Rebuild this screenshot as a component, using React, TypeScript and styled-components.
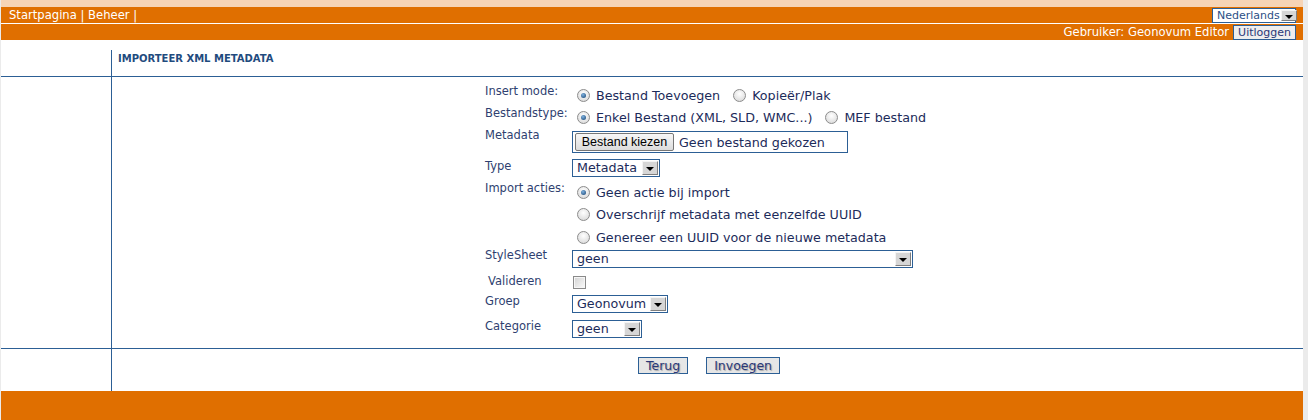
import React from "react";
import styled, { createGlobalStyle } from "styled-components";

const GlobalStyle = createGlobalStyle`
  html, body {
    margin: 0;
    padding: 0;
    background: #ebebeb;
  }
  body {
    font-family: "DejaVu Sans", Verdana, sans-serif;
    overflow: hidden;
  }
`;

const BLUE = "#2c5f95";
const ORANGE = "#e06f00";
const NAVY = "#1c2b5a";

const Page = styled.div`
  width: 1302px;
  margin-left: 1px;
  background: #fff;
`;

const TopStrip = styled.div`
  height: 7px;
  background: #f6d4b6;
`;

const NavBar = styled.div`
  height: 16px;
  background: ${ORANGE};
  display: flex;
  align-items: flex-start;
  justify-content: space-between;
  padding: 0 7px 0 8px;
  color: #fff;
  font-size: 11.6px;
  line-height: 16px;
`;

const LangWrap = styled.div`
  display: flex;
  padding-top: 1px;
`;

const UserBar = styled.div`
  height: 16px;
  background: ${ORANGE};
  border-top: 1px solid #fff;
  display: flex;
  align-items: center;
  justify-content: flex-end;
  gap: 4px;
  padding-right: 7px;
  color: #fff;
  font-size: 11.6px;
`;

const SelectBox = styled.div<{ $w: number; $small?: boolean }>`
  display: flex;
  align-items: center;
  justify-content: space-between;
  box-sizing: border-box;
  width: ${(p) => p.$w}px;
  height: ${(p) => (p.$small ? 15 : 18)}px;
  border: 1px solid ${BLUE};
  background: #fff;
  padding-left: 4px;
  font-size: ${(p) => (p.$small ? 11 : 12.7)}px;
  color: ${(p) => (p.$small ? "#2c4f86" : NAVY)};
  line-height: 1;
`;

const Arrow = styled.span<{ $small?: boolean }>`
  position: relative;
  flex: none;
  box-sizing: border-box;
  width: 16px;
  height: ${(p) => (p.$small ? 11 : 14)}px;
  margin: 1px;
  background: #d6d6d6;
  border: 1px solid;
  border-color: #f4f4f4 #7f7f7f #7f7f7f #f4f4f4;
  &::after {
    content: "";
    position: absolute;
    left: 3px;
    top: ${(p) => (p.$small ? 4 : 5)}px;
    border-left: 4px solid transparent;
    border-right: 4px solid transparent;
    border-top: 4px solid #000;
  }
`;

const HeadButton = styled.div`
  box-sizing: border-box;
  height: 15px;
  padding: 0 4px;
  border: 1px solid ${BLUE};
  background: #eeeeee;
  color: #2a3878;
  font-size: 11px;
  line-height: 13px;
`;

const TableRow = styled.div<{ $h: number; $last?: boolean }>`
  display: grid;
  grid-template-columns: 110px 1fr;
  height: ${(p) => p.$h}px;
  border-bottom: ${(p) => (p.$last ? "none" : `1px solid ${BLUE}`)};
`;

const SideCell = styled.div``;

const TitleCell = styled.div`
  margin-top: 10px;
  border-left: 1px solid ${BLUE};
  padding: 2px 0 0 6px;
  font-size: 10px;
  line-height: 14px;
  font-weight: bold;
  color: #1f4b7e;
`;

const MainCell = styled.div<{ $pad: number }>`
  border-left: 1px solid ${BLUE};
  display: flex;
  justify-content: center;
  align-items: flex-start;
  padding-top: ${(p) => p.$pad}px;
`;

const Form = styled.div`
  width: 445px;
  display: flex;
  flex-direction: column;
`;

const FormRow = styled.div`
  display: grid;
  grid-template-columns: 87px 1fr;
  align-items: start;
`;

const Label = styled.div<{ $indent?: number; $top?: number }>`
  font-size: 11.5px;
  line-height: 14px;
  color: #2f3f70;
  padding-left: ${(p) => p.$indent ?? 0}px;
  margin-top: ${(p) => p.$top ?? 0}px;
`;

const Controls = styled.div`
  display: flex;
  flex-direction: column;
`;

const RadioLine = styled.div<{ $h?: number }>`
  display: flex;
  align-items: center;
  height: ${(p) => p.$h ?? 22}px;
  padding-left: 5px;
`;

const Option = styled.label`
  display: inline-flex;
  align-items: center;
  gap: 6px;
  font-size: 12.7px;
  color: ${NAVY};
  white-space: nowrap;
  & + & {
    margin-left: 13px;
  }
`;

const Radio = styled.span<{ $checked?: boolean }>`
  position: relative;
  flex: none;
  box-sizing: border-box;
  width: 13px;
  height: 13px;
  border-radius: 50%;
  border: 1px solid #8c8c8c;
  background: radial-gradient(circle at 50% 35%, #ffffff, #d4d4d4);
  &::after {
    content: "";
    display: ${(p) => (p.$checked ? "block" : "none")};
    position: absolute;
    inset: 3px;
    border-radius: 50%;
    background: radial-gradient(circle at 40% 35%, #7fb2e0, #133f6d);
  }
`;

const FileBox = styled.div`
  display: flex;
  align-items: center;
  gap: 5px;
  box-sizing: border-box;
  width: 276px;
  height: 22px;
  margin: 3px 0 4px;
  padding-left: 2px;
  border: 1px solid ${BLUE};
  font-size: 12.7px;
  color: ${NAVY};
`;

const FileButton = styled.div`
  box-sizing: border-box;
  height: 18px;
  width: 99px;
  border: 1px solid #767676;
  border-radius: 2px;
  background: linear-gradient(#f7f7f7, #dcdcdc);
  font-family: "Liberation Sans", Arial, sans-serif;
  font-size: 12.5px;
  line-height: 16px;
  text-align: center;
  color: #000;
`;

const SelectWrap = styled.div<{ $top?: number }>`
  display: flex;
  margin: ${(p) => p.$top ?? 2}px 0 4px;
`;

const Checkbox = styled.span`
  display: block;
  box-sizing: border-box;
  width: 13px;
  height: 13px;
  margin: 4px 0 4px 1px;
  border: 1px solid #8a8a8a;
  box-shadow: inset 0 0 0 1px #f6f6f6;
  background: linear-gradient(135deg, #d2d2d2, #fbfbfb);
`;

const ButtonBar = styled.div`
  display: flex;
  gap: 18px;
  margin-left: 3px;
`;

const ActionButton = styled.div<{ $px: number }>`
  box-sizing: border-box;
  height: 17px;
  padding: 0 ${(p) => p.$px}px;
  border: 1px solid ${BLUE};
  background: #e6e6e6;
  color: #2a3878;
  font-size: 12.5px;
  line-height: 15px;
  text-shadow: 1px 1px 1px #a0a0a0;
`;

const Footer = styled.div`
  height: 30px;
  background: ${ORANGE};
`;

const Select: React.FC<{ value: string; width: number }> = ({ value, width }) => (
  <SelectBox $w={width}>
    <span>{value}</span>
    <Arrow />
  </SelectBox>
);

export default function App() {
  return (
    <Page>
      <GlobalStyle />
      <TopStrip />
      <NavBar>
        <span>Startpagina | Beheer |</span>
        <LangWrap>
          <SelectBox $w={84} $small>
            <span>Nederlands</span>
            <Arrow $small />
          </SelectBox>
        </LangWrap>
      </NavBar>
      <UserBar>
        <span>Gebruiker: Geonovum Editor</span>
        <HeadButton>Uitloggen</HeadButton>
      </UserBar>

      <TableRow $h={36}>
        <SideCell />
        <TitleCell>IMPORTEER XML METADATA</TitleCell>
      </TableRow>

      <TableRow $h={271}>
        <SideCell />
        <MainCell $pad={7}>
          <Form>
            <FormRow>
              <Label>Insert mode:</Label>
              <RadioLine>
                <Option>
                  <Radio $checked /> Bestand Toevoegen
                </Option>
                <Option>
                  <Radio /> Kopieër/Plak
                </Option>
              </RadioLine>
            </FormRow>
            <FormRow>
              <Label>Bestandstype:</Label>
              <RadioLine>
                <Option>
                  <Radio $checked /> Enkel Bestand (XML, SLD, WMC...)
                </Option>
                <Option>
                  <Radio /> MEF bestand
                </Option>
              </RadioLine>
            </FormRow>
            <FormRow>
              <Label>Metadata</Label>
              <FileBox>
                <FileButton>Bestand kiezen</FileButton>
                <span>Geen bestand gekozen</span>
              </FileBox>
            </FormRow>
            <FormRow>
              <Label $top={2}>Type</Label>
              <SelectWrap>
                <Select value="Metadata" width={88} />
              </SelectWrap>
            </FormRow>
            <FormRow>
              <Label>Import acties:</Label>
              <Controls>
                <RadioLine $h={22.5}>
                  <Option>
                    <Radio $checked /> Geen actie bij import
                  </Option>
                </RadioLine>
                <RadioLine $h={22.5}>
                  <Option>
                    <Radio /> Overschrijf metadata met eenzelfde UUID
                  </Option>
                </RadioLine>
                <RadioLine $h={22}>
                  <Option>
                    <Radio /> Genereer een UUID voor de nieuwe metadata
                  </Option>
                </RadioLine>
              </Controls>
            </FormRow>
            <FormRow>
              <Label>StyleSheet</Label>
              <SelectWrap>
                <Select value="geen" width={341} />
              </SelectWrap>
            </FormRow>
            <FormRow>
              <Label $indent={3} $top={2}>
                Valideren
              </Label>
              <Checkbox />
            </FormRow>
            <FormRow>
              <Label $top={1}>Groep</Label>
              <SelectWrap>
                <Select value="Geonovum" width={96} />
              </SelectWrap>
            </FormRow>
            <FormRow>
              <Label $top={2}>Categorie</Label>
              <SelectWrap $top={3}>
                <Select value="geen" width={70} />
              </SelectWrap>
            </FormRow>
          </Form>
        </MainCell>
      </TableRow>

      <TableRow $h={42} $last>
        <SideCell />
        <MainCell $pad={8}>
          <ButtonBar>
            <ActionButton $px={7}>Terug</ActionButton>
            <ActionButton $px={7}>Invoegen</ActionButton>
          </ButtonBar>
        </MainCell>
      </TableRow>
      <Footer />
    </Page>
  );
}
